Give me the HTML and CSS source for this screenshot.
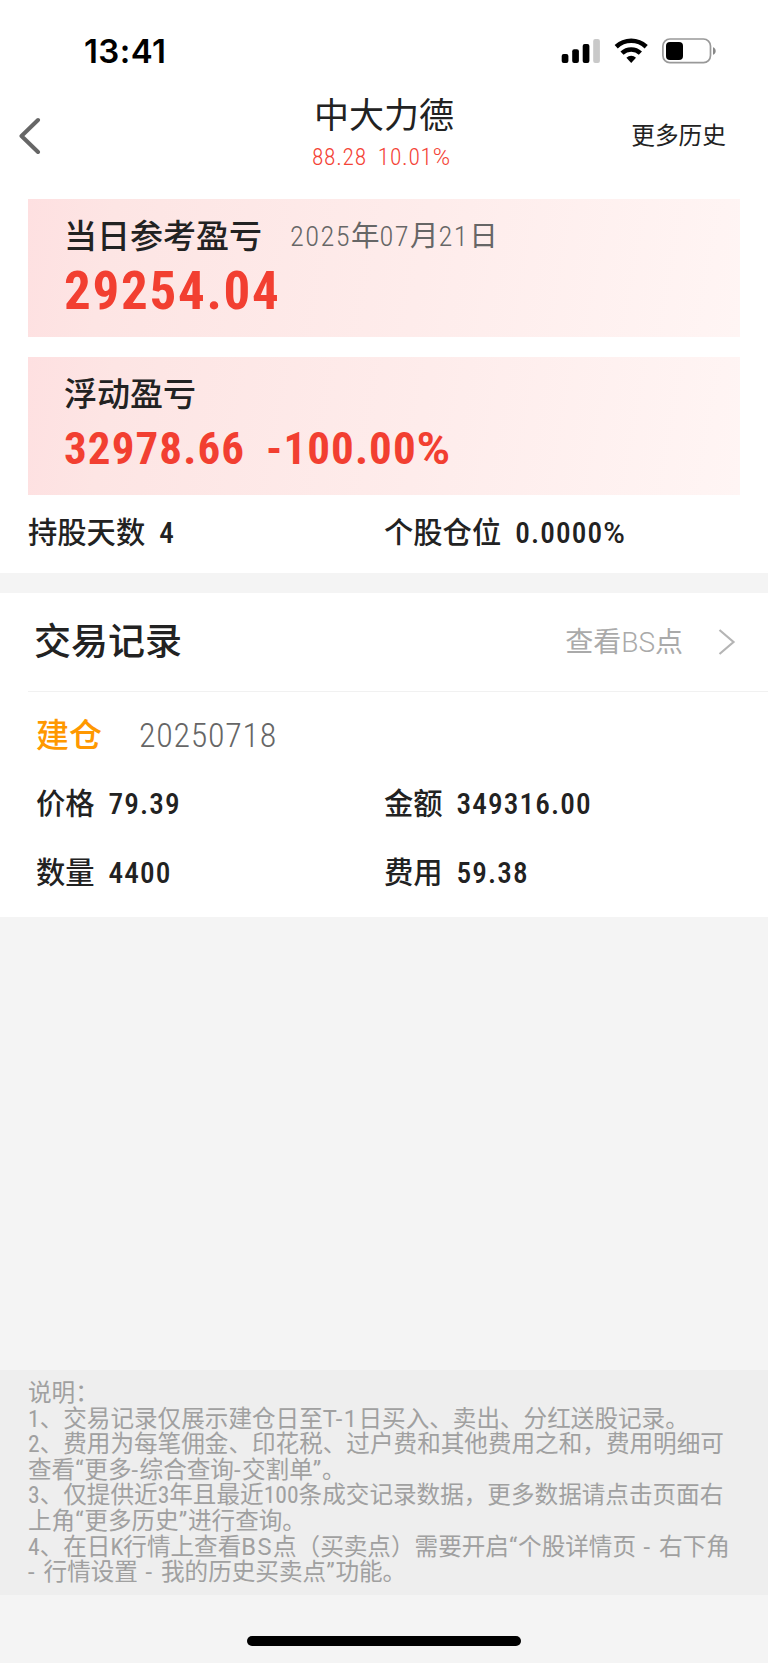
FILE: index.html
```html
<!DOCTYPE html>
<html lang="zh-CN">
<head>
    <meta charset="UTF-8">
    <meta name="viewport" content="width=device-width, initial-scale=1.0">
    <title>中大力德</title>
    <link rel="stylesheet" href="styles.css">
</head>
<body>
    <div id="app">
        <div class="status-bar">
            <div class="time">13:41</div>
            <svg class="status-icons" width="156" height="28" viewBox="0 0 156 28">
                <rect x="1.7" y="17" width="6.7" height="9" rx="2"/>
                <rect x="12.2" y="12.3" width="6.7" height="13.7" rx="2"/>
                <rect x="22.7" y="7" width="6.7" height="19" rx="2"/>
                <rect x="33.2" y="2" width="6.7" height="24" rx="2" fill="#c9c9c9"/>
                <g fill="none" stroke="#000" stroke-width="4.6">
                    <path d="M56.2 9.7a22 22 0 0 1 30 0"/>
                    <path d="M62 16.1a13.5 13.5 0 0 1 18.4 0"/>
                </g>
                <path d="M66.4 20.7a7 7 0 0 1 9.6 0L71.2 26z"/>
                <rect x="102.9" y="2" width="47.6" height="23.6" rx="7" fill="none" stroke="#999" stroke-width="1.7"/>
                <rect x="106" y="5" width="17" height="18" rx="4"/>
                <path d="M153 10.3v7.4c3.6-1 3.6-6.4 0-7.4z" fill="#888"/>
            </svg>
        </div>

        <div class="header">
            <svg class="back" width="24" height="38" viewBox="0 0 24 38">
                <path d="M19 3L2.5 19L19 35" fill="none" stroke="#666" stroke-width="4" stroke-linecap="round" stroke-linejoin="round"/>
            </svg>
            <div class="stock">
                <div class="stock-name">中大力德</div>
                <div class="stock-price"><span>88.28</span><span>10.01<span class="pct">%</span></span></div>
            </div>
            <div class="more">更多历史</div>
        </div>

        <div class="summary">
            <div class="card">
                <div class="card-title">
                    <span class="bold">当日参考盈亏</span>
                    <span class="date"><span class="num">2025</span>年<span class="num">07</span>月<span class="num">21</span>日</span>
                </div>
                <div class="amount">29254.04</div>
            </div>
            <div class="card">
                <div class="card-title">浮动盈亏</div>
                <div class="amount small"><span>32978.66</span><span>-100.00<span class="pct">%</span></span></div>
            </div>
            <div class="row">
                <div class="cell">持股天数<span class="value">4</span></div>
                <div class="cell">个股仓位<span class="value">0.0000<span class="pct">%</span></span></div>
            </div>
        </div>

        <div class="records">
            <div class="records-header">
                <h2>交易记录</h2>
                <div class="bs-link">查看<span class="num">BS</span>点</div>
                <svg width="20" height="28" viewBox="0 0 20 28">
                    <path d="M2.5 2L16.5 14L2.5 26" fill="none" stroke="#b5b5b5" stroke-width="2.2"/>
                </svg>
            </div>
            <div class="record">
                <div class="record-title">
                    <span class="type">建仓</span>
                    <span class="record-date">20250718</span>
                </div>
                <div class="row">
                    <div class="cell">价格<span class="value">79.39</span></div>
                    <div class="cell">金额<span class="value">349316.00</span></div>
                </div>
                <div class="row">
                    <div class="cell">数量<span class="value">4400</span></div>
                    <div class="cell">费用<span class="value">59.38</span></div>
                </div>
            </div>
        </div>

        <div class="notes">
            <p>说明：</p>
            <p><span class="num">1</span>、交易记录仅展示建仓日至<span class="latin">T-1</span>日买入、卖出、分红送股记录。</p>
            <p><span class="num">2</span>、费用为每笔佣金、印花税、过户费和其他费用之和，费用明细可<br>查看<span class="quote">“</span>更多<span class="latin">-</span>综合查询<span class="latin">-</span>交割单<span class="quote">”</span>。</p>
            <p><span class="num">3</span>、仅提供近<span class="num">3</span>年且最近<span class="num">100</span>条成交记录数据，更多数据请点击页面右<br>上角<span class="quote">“</span>更多历史<span class="quote">”</span>进行查询。</p>
            <p><span class="num">4</span>、在日<span class="num">K</span>行情上查看<span class="latin">BS</span>点（买卖点）需要开启<span class="quote">“</span>个股详情页<span class="dash"> - </span>右下角<br><span class="dash">- </span>行情设置<span class="dash"> - </span>我的历史买卖点<span class="quote">”</span>功能。</p>
        </div>

        <div class="home-bar"></div>
    </div>
</body>
</html>
```
FILE: styles.css
```css
body {
    font-family: Roboto, 'Noto Sans CJK SC', sans-serif;
    margin: 0;
    background: #f4f4f4;
    color: #222;
}
#app {
    display: flex;
    flex-direction: column;
    width: 768px;
    height: 1663px;
    overflow: hidden;
}
.status-bar {
    display: flex;
    justify-content: space-between;
    align-items: center;
    height: 84px;
    padding: 17px 52px 0 84px;
    box-sizing: border-box;
    background: #fff;
}
.time {
    font-family: Inter, sans-serif;
    font-size: 33px;
    font-weight: 600;
    color: #000;
    letter-spacing: 0.4px;
}
.header {
    display: grid;
    grid-template-columns: 1fr auto 1fr;
    align-items: center;
    height: 115px;
    padding: 0 42px 0 19px;
    box-sizing: border-box;
    background: #fff;
}
.back {
    margin-top: -11px;
}
.stock {
    margin-left: 23px;
    height: 105px;
    text-align: center;
}
.stock-name {
    font-size: 35px;
    line-height: 40px;
    margin-top: 8px;
    height: 47px;
}
.stock-price {
    display: flex;
    gap: 11px;
    margin-left: -2px;
    font-size: 23.5px;
    line-height: 26px;
    font-weight: 350;
    font-stretch: 87%;
    letter-spacing: 0.7px;
    white-space: nowrap;
    color: #f44336;
}
.pct {
    font-stretch: 100%;
}
.more {
    font-size: 23.7px;
    line-height: 30px;
    margin-top: -11px;
    text-align: right;
}
.summary {
    height: 374px;
    padding: 0 28px;
    background: #fff;
}
.card {
    height: 138px;
    margin-bottom: 20px;
    padding: 20px 36px;
    box-sizing: border-box;
    background: linear-gradient(100deg, #fee0e1 0%, #fde5e4 12%, #feeceb 55%, #fff5f4 100%);
}
.card-title {
    display: flex;
    align-items: center;
    height: 36px;
    font-size: 33px;
    line-height: 36px;
    font-weight: 500;
}
.bold {
    font-weight: 500;
}
.date {
    margin-left: 28px;
    font-size: 28.5px;
    font-weight: 400;
    color: #666;
}
.date .num {
    font-weight: 350;
    font-stretch: 87%;
    letter-spacing: 1.4px;
}
.amount {
    font-size: 53px;
    line-height: 62px;
    margin-top: 5px;
    font-weight: 700;
    font-stretch: 87%;
    letter-spacing: 1.7px;
    color: #f23f31;
}
.amount.small {
    display: flex;
    gap: 21px;
    font-size: 45px;
    letter-spacing: 1.1px;
}
.row {
    display: flex;
    height: 36px;
    font-size: 29.3px;
    line-height: 36px;
    font-weight: 500;
}
.cell {
    flex: 1;
    display: flex;
}
.value {
    margin-left: 14px;
    font-stretch: 87%;
    letter-spacing: 1.1px;
}
.records {
    margin-top: 20px;
    height: 324px;
    background: #fff;
}
.records-header {
    display: flex;
    align-items: center;
    height: 99px;
    margin-left: 28px;
    padding: 0 31px 0 6px;
    box-sizing: border-box;
    border-bottom: 1px solid #f1f1f1;
}
h2 {
    flex: 1;
    margin: 2px 0 0;
    font-size: 37px;
    line-height: 44px;
    font-weight: 500;
}
.bs-link {
    margin: 2px 34px 0 0;
    font-size: 28px;
    line-height: 36px;
    color: #aaa;
}
.bs-link .num {
    font-weight: 350;
}
.record {
    padding: 26px 28px 0 36px;
}
.record-title {
    display: flex;
    align-items: center;
    height: 35px;
    line-height: 35px;
    margin-bottom: 33px;
}
.type {
    font-size: 33px;
    font-weight: 500;
    color: #ff9800;
}
.record-date {
    margin-left: 37px;
    font-size: 34px;
    font-weight: 350;
    font-stretch: 87%;
    letter-spacing: 0.7px;
    color: #666;
}
.record .row {
    margin-bottom: 33px;
}
.record .cell:first-child {
    flex: none;
    width: 348px;
}
.notes {
    margin-top: 453px;
    height: 225px;
    padding: 11px 28px;
    box-sizing: border-box;
    background: #eee;
    color: #a0a0a0;
    font-size: 23.6px;
    line-height: 25.6px;
    white-space: nowrap;
}
.notes p {
    margin: 0;
}
.notes .num {
    font-stretch: 87%;
}
.latin {
    letter-spacing: 1.5px;
}
.quote {
    letter-spacing: 0.8px;
}
.dash {
    letter-spacing: 1.6px;
}
.home-bar {
    width: 274px;
    height: 10px;
    margin: 41px auto 0;
    border-radius: 5px;
    background: #000;
}
```
